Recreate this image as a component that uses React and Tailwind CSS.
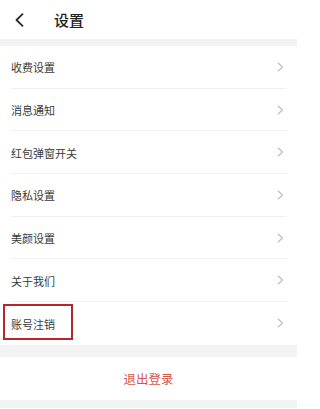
import React from "react";

const items = ["收费设置", "消息通知", "红包弹窗开关", "隐私设置", "美颜设置", "关于我们", "账号注销"];

function Chevron() {
  return (
    <svg width="7" height="10" viewBox="0 0 7 10" fill="none">
      <path d="M1.2 1 L5.4 5 L1.2 9" stroke="#bdbdbd" strokeWidth="1.1" strokeLinecap="round" strokeLinejoin="round" />
    </svg>
  );
}

export default function App() {
  return (
    <div
      className="w-[300px] h-[409px] bg-white overflow-hidden"
      style={{ fontFamily: '"Noto Sans CJK SC", "Noto Sans", sans-serif' }}
    >
      <div className="h-[39px] flex items-center">
        <svg className="ml-[14px]" width="11" height="14" viewBox="0 0 11 14" fill="none">
          <path d="M8.5 1.2 L2.5 7 L8.5 12.8" stroke="#2a2a2a" strokeWidth="1.8" strokeLinecap="round" strokeLinejoin="round" />
        </svg>
        <span className="ml-[29px] text-[15px] font-medium text-[#222] leading-none pb-[1px]">设置</span>
      </div>
      <div className="h-[7px] w-[297px] bg-[#f3f3f3]" />
      <div className="w-[297px]">
        {items.map((t, i) => (
          <div key={t} className="relative h-[42.7px] pl-[11px] pr-[10px]">
            <div
              className={`h-full flex items-center justify-between pr-[3px] ${
                i < items.length - 1 ? "border-b border-[#f0f0f0]" : ""
              }`}
            >
              <span className="text-[11px] text-[#3a3a3a] leading-none pt-[2px]">{t}</span>
              <Chevron />
            </div>
            {i === items.length - 1 && (
              <div className="absolute left-[2.5px] top-[2px] w-[70px] h-[36px] border-2 border-[#b3282d]" />
            )}
          </div>
        ))}
      </div>
      <div className="h-[12px] w-[297px] bg-[#f3f3f3]" />
      <div className="h-[43px] w-[297px] flex items-center justify-center">
        <span className="text-[12.5px] text-[#d4544c] leading-none pt-[1px]">退出登录</span>
      </div>
      <div className="h-[8px] w-[297px] bg-[#f3f3f3]" />
    </div>
  );
}
